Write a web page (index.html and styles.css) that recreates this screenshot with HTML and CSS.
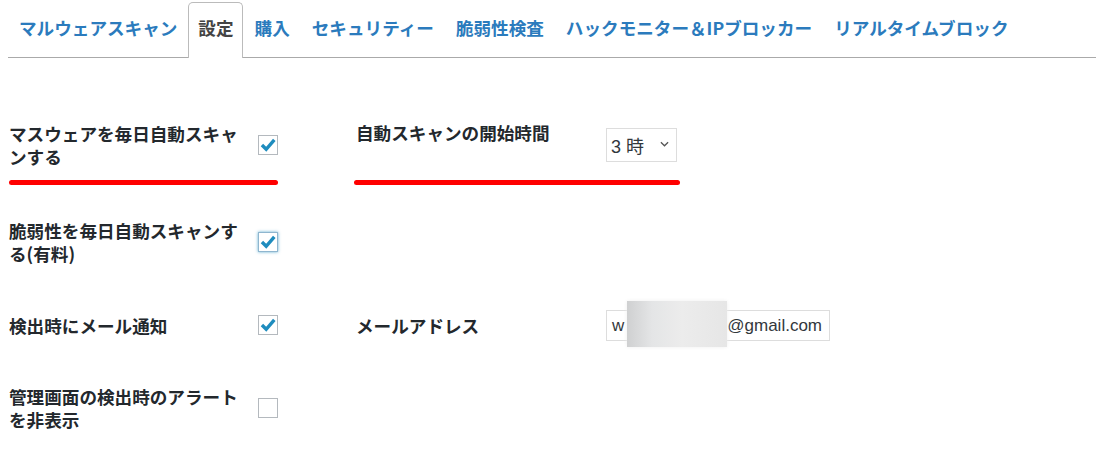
FILE: index.html
```html
<!DOCTYPE html>
<html lang="ja">
<head>
  <meta charset="UTF-8" />
  <title>設定</title>
  <link rel="stylesheet" href="styles.css">
</head>
<body>
  <div class="wrap">
    <ul class="tabs">
      <li class="tab">マルウェアスキャン</li>
      <li class="tab active">設定</li>
      <li class="tab">購入</li>
      <li class="tab">セキュリティー</li>
      <li class="tab">脆弱性検査</li>
      <li class="tab">ハックモニター＆IPブロッカー</li>
      <li class="tab">リアルタイムブロック</li>
    </ul>

    <div class="settings">
      <div class="row first">
        <div class="label">マスウェアを毎日自動スキャンする</div>
        <div><span class="check on"><svg viewBox="0 0 16 16"><path d="M2.6 8 L6.4 11.8 L13.6 3.4" /></svg></span></div>
        <div class="label label-top">自動スキャンの開始時間</div>
        <div>
          <div class="select">3 時<svg class="chev" viewBox="0 0 10 6"><path d="M1 1 L5 5 L9 1" /></svg></div>
        </div>
        <span class="mark mark-left"></span>
        <span class="mark mark-right"></span>
      </div>

      <div class="row">
        <div class="label">脆弱性を毎日自動スキャンする(有料)</div>
        <div><span class="check on focus"><svg viewBox="0 0 16 16"><path d="M2.6 8 L6.4 11.8 L13.6 3.4" /></svg></span></div>
      </div>

      <div class="row short">
        <div class="label">検出時にメール通知</div>
        <div><span class="check on"><svg viewBox="0 0 16 16"><path d="M2.6 8 L6.4 11.8 L13.6 3.4" /></svg></span></div>
        <div class="label">メールアドレス</div>
        <div>
          <div class="email">w<span class="hidden-part"></span>@gmail.com<span class="blur"></span></div>
        </div>
      </div>

      <div class="row">
        <div class="label">管理画面の検出時のアラートを非表示</div>
        <div><span class="check"></span></div>
      </div>
    </div>
  </div>
</body>
</html>
```

FILE: styles.css
```css
body {
  margin: 0;
  background: #fff;
  font-family: "Noto Sans CJK JP", "Noto Sans", sans-serif;
  color: #23282d;
}
.wrap {
  margin-left: 8px;
}
.tabs {
  display: flex;
  margin: 0;
  padding: 2px 0 0;
  list-style: none;
  border-bottom: 1px solid #aaa;
}
.tab {
  padding: 12px 10px 16px;
  border: 1px solid transparent;
  border-bottom: 0;
  margin-bottom: -1px;
  font-size: 17.6px;
  font-weight: bold;
  line-height: 26px;
  color: #2b7bbd;
  white-space: nowrap;
}
.tab:first-child {
  padding-right: 9px;
}
.tab.active {
  color: #444;
  background: #fff;
  border-color: #bbb;
  border-radius: 5px 5px 0 0;
  padding: 12px 8px 17px 9px;
  margin: 0 1px -1px;
}
.settings {
  padding: 63px 0 0 1px;
}
.row {
  position: relative;
  display: grid;
  grid-template-columns: 241px 106px 250px auto;
  align-items: center;
  min-height: 48px;
  margin-bottom: 41px;
}
.row.first {
  margin-bottom: 49px;
}
.row.short {
  min-height: 36px;
}
.label {
  font-size: 17.6px;
  font-weight: bold;
  line-height: 23px;
  padding-right: 4px;
}
.label-top {
  align-self: start;
}
.check {
  display: block;
  width: 18px;
  height: 18px;
  margin-left: 8px;
  border: 1px solid #b4b9be;
  background: #fff;
}
.check svg {
  display: block;
  width: 18px;
  height: 18px;
}
.check path {
  fill: none;
  stroke: #1e8cbe;
  stroke-width: 3;
}
.check.focus {
  border-color: #8fb6cf;
  box-shadow: 0 0 3px rgba(30, 140, 190, 0.7);
}
.select {
  display: flex;
  align-items: center;
  width: 65px;
  height: 32px;
  padding-left: 4px;
  border: 1px solid #ddd;
  font-size: 18px;
  font-family: "Liberation Sans", "Noto Sans CJK JP", sans-serif;
  color: #32373c;
}
.chev {
  width: 9px;
  height: 6px;
  margin-left: 16px;
  margin-top: -3px;
}
.chev path {
  fill: none;
  stroke: #555;
  stroke-width: 1.4;
}
.email {
  position: relative;
  width: 217px;
  height: 29px;
  padding-left: 5px;
  border: 1px solid #ddd;
  font-family: "Liberation Sans", Arial, sans-serif;
  font-size: 17px;
  line-height: 29px;
  color: #32373c;
  white-space: nowrap;
}
.hidden-part {
  display: inline-block;
  width: 103px;
}
.blur {
  position: absolute;
  left: 20px;
  top: -10px;
  width: 100px;
  height: 46px;
  background: linear-gradient(90deg, #cfd0d1 0%, #e4e5e6 25%, #ececec 55%, #e6e6e6 100%);
  box-shadow: 0 0 4px #eee;
}
.mark {
  position: absolute;
  top: 59px;
  height: 5px;
  background: #f00;
  border-radius: 3px;
}
.mark-left {
  left: 0;
  width: 269px;
}
.mark-right {
  left: 345px;
  width: 326px;
}
```
